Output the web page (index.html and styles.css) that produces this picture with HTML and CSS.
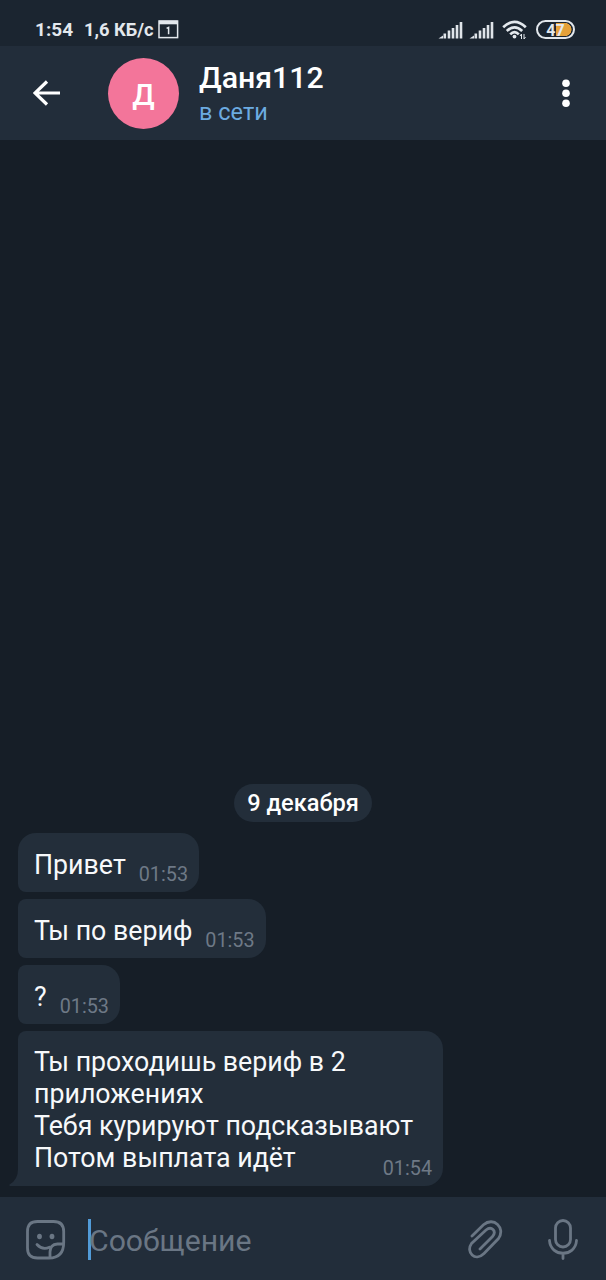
FILE: index.html
```html
<!DOCTYPE html>
<html lang="ru">
<head>
<meta charset="utf-8">
<title>Даня112</title>
<link rel="stylesheet" href="styles.css">
</head>
<body>
<div class="phone">
  <div class="status">
    <span class="clock">1:54</span>
    <span class="speed">1,6 КБ/с</span>
    <svg class="calendar" width="21" height="19" viewBox="0 0 21 19"><rect x="1" y="1" width="18.6" height="16.6" fill="none" stroke="#e3e8ed" stroke-width="1.5"/><path d="M1 2.5h18.6" stroke="#e3e8ed" stroke-width="3.6"/><path d="M8.6 8.4l2-1v6.8" fill="none" stroke="#e3e8ed" stroke-width="1.5"/></svg>
    <svg class="signal" width="25" height="18" viewBox="0 0 25 18"><path d="M.5 17.5L5 14.5v3z" fill="#dfe4e9"/><path d="M6.8 17.5v-5M11 17.5v-8M15 17.5V7M19 17.5V4M23 17.5V1" stroke="#dfe4e9" stroke-width="2.6"/></svg>
    <svg class="signal second" width="25" height="18" viewBox="0 0 25 18"><path d="M.5 17.5L5 14.5v3z" fill="#dfe4e9"/><path d="M6.8 17.5v-5M11 17.5v-8M15 17.5V7M19 17.5V4M23 17.5V1" stroke="#dfe4e9" stroke-width="2.6"/></svg>
    <svg class="wifi" width="26" height="20" viewBox="0 0 26 20"><g fill="none" stroke="#e3e8ed" stroke-width="2.7"><path d="M1.2 7.2Q12.5-3.5 23.8 7.2"/><path d="M4.8 11Q12.5 3.6 20.2 11"/><path d="M8.2 14.4Q12.5 10 16.8 14.4"/></g><circle cx="12.5" cy="16.6" r="1.9" fill="#e3e8ed"/><path d="M19.5 19v-5l-1.5 2M22 14v5l1.5-2" fill="none" stroke="#e3e8ed" stroke-width="1"/></svg>
    <div class="battery"><span>47</span></div>
  </div>
  <header class="header">
    <svg class="back" width="28" height="26" viewBox="0 0 28 26"><path d="M27 13H2M14 1.5L2 13l12 11.5" fill="none" stroke="#fff" stroke-width="3.2"/></svg>
    <div class="avatar">Д</div>
    <div class="peer">
      <div class="name">Даня112</div>
      <div class="online">в сети</div>
    </div>
    <svg class="more" width="10" height="30" viewBox="0 0 10 30" fill="#fff"><circle cx="5" cy="5.3" r="3.8"/><circle cx="5" cy="15.3" r="3.8"/><circle cx="5" cy="25.3" r="3.8"/></svg>
  </header>
  <main class="chat">
    <div class="date">9 декабря</div>
    <div class="bubble first"><span class="text">Привет</span><span class="time">01:53</span></div>
    <div class="bubble"><span class="text">Ты по вериф</span><span class="time">01:53</span></div>
    <div class="bubble"><span class="text">?</span><span class="time">01:53</span></div>
    <div class="bubble long">
      <span class="text">Ты проходишь вериф в 2<br>приложениях<br>Тебя курируют подсказывают<br>Потом выплата идёт</span>
      <span class="time">01:54</span>
      <svg class="tail" width="18" height="22" viewBox="0 0 18 22"><path d="M9 0h9v22H1Q0 21.5 .5 20.5Q9 16 9 5z" fill="#232e3a"/></svg>
    </div>
  </main>
  <footer class="composer">
    <svg class="sticker" width="40" height="40" viewBox="0 0 40 40"><g fill="none" stroke="#6a7684" stroke-width="2.8" stroke-linecap="round" stroke-linejoin="round"><path d="M11.5 1.5h16Q37.7 1.5 37.7 11.5v11Q37.7 38 23 38H11.5Q1.5 38 1.5 28V11.5Q1.5 1.5 11.5 1.5z"/><path d="M11 24.5Q16.5 30.5 23.5 27.2"/><path d="M24 37.5V32Q24 24.5 31.5 24H37"/></g><ellipse cx="13.5" cy="16.5" rx="2.4" ry="2.8" fill="#6a7684"/><ellipse cx="26" cy="16.5" rx="2.4" ry="2.8" fill="#6a7684"/></svg>
    <div class="caret"></div>
    <div class="placeholder">Сообщение</div>
    <svg class="clip" width="36" height="42" viewBox="0 0 36 42"><path d="M4 17L15.5 5.8C25.5-3 38 9 30.5 19.5L16 34.5C7 43.5-2.5 33 3.5 24.5L18 11C23.5 6.5 29 12 24.5 17.5L12 30" fill="none" stroke="#6a7684" stroke-width="2.8" stroke-linecap="round"/></svg>
    <svg class="mic" width="32" height="42" viewBox="0 0 32 42"><g fill="none" stroke="#6a7684" stroke-width="2.8" stroke-linecap="round"><rect x="8.5" y="1.5" width="15" height="26.5" rx="7.5"/><path d="M2.5 21.5C3.5 38.5 28.5 38.5 29.5 21.5M16 34.5v5"/></g></svg>
  </footer>
</div>
</body>
</html>
```

FILE: styles.css
```css
body { margin: 0; background: #161e27; font-family: Roboto, "Noto Sans", sans-serif; color: #fff; }
.phone { width: 606px; height: 1280px; display: flex; flex-direction: column; overflow: hidden; }

.status { height: 46px; flex: none; display: flex; align-items: flex-start; box-sizing: border-box; padding: 20px 31px 0 35px; background: #1b2530; color: #e3e8ed; font-size: 18.3px; font-weight: 700; white-space: nowrap; }
.status > * { flex: none; }
.clock, .speed { line-height: 20px; }
.clock { width: 49px; font-size: 19px; }
.speed { width: 74px; }
.signal { margin: 1px 0 0 auto; }
.signal.second { margin-left: 6px; }
.wifi { margin-left: 8px; }
.battery { box-sizing: border-box; width: 39px; height: 19px; margin-left: 8px; border: 2px solid #e3e8ed; border-radius: 10px; background: radial-gradient(circle at 27px 50%, #e5a139 6.2px, transparent 6.8px), linear-gradient(to right, transparent 18px, #e5a139 18px, #e5a139 27px, transparent 27px) 0 1px / 100% 13px no-repeat; display: flex; align-items: center; justify-content: center; font-size: 16px; line-height: 15px; }
.battery span { padding-top: 1px; }

.header { height: 94px; flex: none; display: flex; align-items: center; box-sizing: border-box; padding: 0 35px 0 33px; background: #222d3a; }
.avatar { box-sizing: border-box; width: 71px; height: 71px; margin-left: 47px; padding-top: 2px; border-radius: 50%; background: #f3759a; display: flex; align-items: center; justify-content: center; font-size: 30px; font-weight: 500; }
.peer { flex: 1; margin-left: 20px; padding-top: 3px; }
.name { font-size: 30.3px; line-height: 36px; font-weight: 500; }
.online { font-size: 23.5px; line-height: 33px; color: #6cabe1; }

.chat { flex: 1; display: flex; flex-direction: column; align-items: flex-start; justify-content: flex-end; gap: 7px; padding: 0 18px 11px; }
.date { align-self: center; box-sizing: border-box; height: 38px; padding: 0 13px; margin-bottom: 4px; border-radius: 19px; background: #232e3a; font-size: 23.6px; line-height: 39px; font-weight: 500; }
.bubble { position: relative; box-sizing: border-box; display: flex; align-items: flex-end; height: 59px; padding: 0 11px 0 16px; border-radius: 8px 18px 18px 8px; background: #232e3a; }
.bubble.first { border-top-left-radius: 18px; }
.text { font-size: 26.75px; line-height: 32px; padding-bottom: 11px; color: #f7f9fb; white-space: nowrap; }
.time { margin-left: 13px; padding-bottom: 5px; font-size: 19.8px; line-height: 24px; color: #6e7986; }
.bubble.long { height: 155px; width: 425px; justify-content: space-between; border-bottom-left-radius: 0; }
.long .text { padding-bottom: 12px; }
.long .time { margin-left: -60px; }
.tail { position: absolute; left: -9px; bottom: 0; }

.composer { height: 83px; flex: none; display: flex; align-items: center; box-sizing: border-box; padding: 2px 27px 0 26px; background: #222d3a; }
.caret { width: 3px; height: 41px; margin: 0 -2px 0 22px; background: #519bd8; }
.placeholder { flex: 1; font-size: 30.2px; line-height: 40px; padding-top: 2px; color: #6a7684; }
.mic { margin-left: 43px; }
```
